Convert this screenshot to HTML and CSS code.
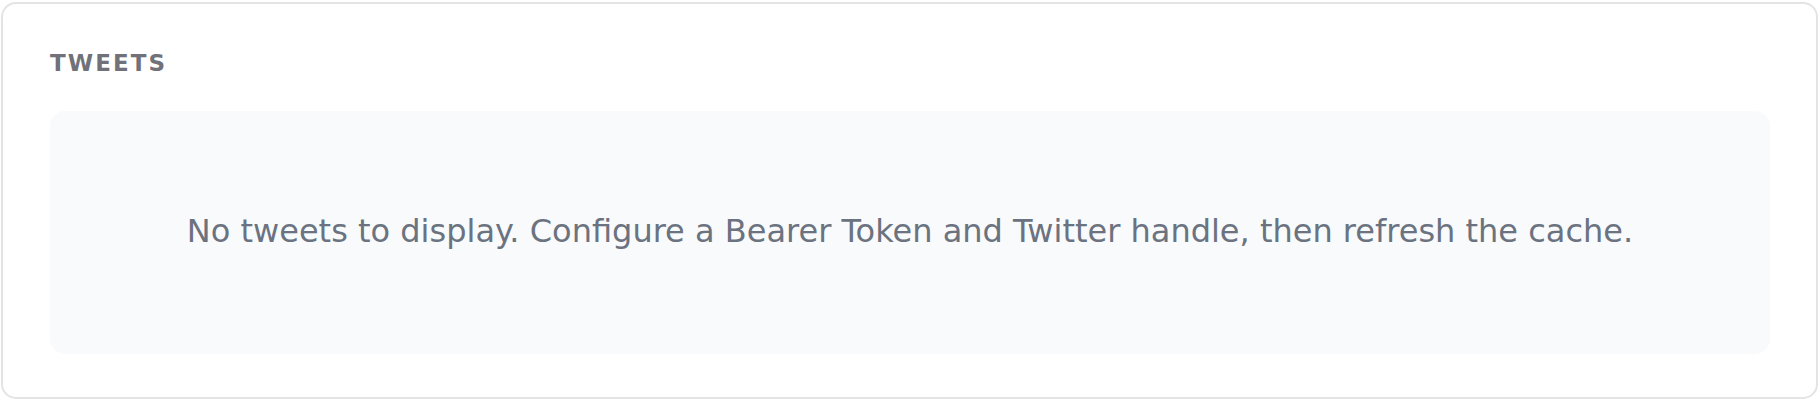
FILE: index.html
```html
<!DOCTYPE html>
<html>
	<head>
		<meta charset="utf-8">
		<title>Tweets</title>
		<link rel="stylesheet" href="styles.css">
	</head>
	<body>
		<div class="card">
			<div class="card-title">Tweets</div>
			<div class="empty">
				No tweets to display. Configure a Bearer Token and Twitter handle, then refresh the cache.
			</div>
		</div>
	</body>
</html>
```

FILE: styles.css
```css
body {
	margin: 0;
	padding: 2px 2px 1px 1px;
	background-color: #ffffff;
	font-family: "DejaVu Sans", sans-serif;
}

div.card {
	box-sizing: border-box;
	height: 397px;
	display: flex;
	flex-direction: column;
	padding: 46px 46px 43px 47px;
	border: 2px solid #e4e4e7;
	border-radius: 15px;
	background-color: #ffffff;
}

div.card-title {
	margin: 0 0 35px 0;
	font-size: 23px;
	font-weight: bold;
	letter-spacing: 0.09em;
	text-transform: uppercase;
	color: #71717a;
}

div.empty {
	flex: 1;
	display: flex;
	align-items: center;
	justify-content: center;
	padding-bottom: 4px;
	border-radius: 15px;
	background-color: #f9fafb;
	font-size: 32px;
	color: #6b7280;
}
```
